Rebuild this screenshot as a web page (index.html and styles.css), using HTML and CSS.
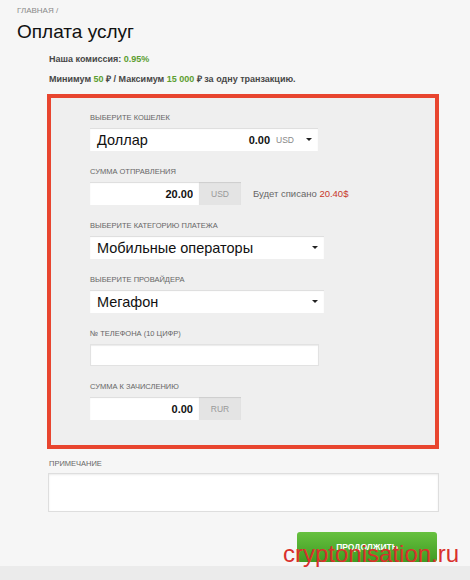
FILE: index.html
```html
<!DOCTYPE html>
<html lang="ru">
<head>
    <meta charset="UTF-8">
    <meta name="viewport" content="width=device-width, initial-scale=1.0">
    <title>Оплата услуг</title>
    <link rel="stylesheet" href="styles.css">
</head>
<body>
    <div class="page">
        <div class="breadcrumb">ГЛАВНАЯ /</div>
        <h1>Оплата услуг</h1>

        <div class="info">
            <p>Наша комиссия: <span class="green">0.95%</span></p>
            <p class="second">Минимум <span class="green">50</span> ₽ / Максимум <span class="green">15 000</span> ₽ за одну транзакцию.</p>
        </div>

        <div class="panel">
            <div class="field">
                <label>Выберите кошелек</label>
                <div class="select wallet">
                    <span class="select-text">Доллар</span>
                    <span class="balance">0.00</span>
                    <span class="currency">USD</span>
                    <span class="caret"></span>
                </div>
            </div>

            <div class="field">
                <label>Сумма отправления</label>
                <div class="row">
                    <div class="amount">
                        <input type="text" value="20.00">
                        <span class="addon">USD</span>
                    </div>
                    <span class="charge">Будет списано <span class="red">20.40$</span></span>
                </div>
            </div>

            <div class="field">
                <label>Выберите категорию платежа</label>
                <div class="select wide">
                    <span class="select-text">Мобильные операторы</span>
                    <span class="caret"></span>
                </div>
            </div>

            <div class="field">
                <label>Выберите провайдера</label>
                <div class="select wide">
                    <span class="select-text">Мегафон</span>
                    <span class="caret"></span>
                </div>
            </div>

            <div class="field">
                <label>№ телефона (10 цифр)</label>
                <input type="text" class="phone">
            </div>

            <div class="field">
                <label>Сумма к зачислению</label>
                <div class="amount">
                    <input type="text" value="0.00">
                    <span class="addon">RUR</span>
                </div>
            </div>
        </div>

        <div class="note">
            <label>Примечание</label>
            <textarea></textarea>
        </div>

        <div class="actions">
            <button>Продолжить</button>
        </div>

        <div class="footer"></div>
    </div>

    <div class="watermark">cryptonisation.ru</div>
</body>
</html>
```

FILE: styles.css
```css
body {
    margin: 0;
    background-color: #f6f6f6;
    font-family: "Liberation Sans", Arial, sans-serif;
    color: #333;
    position: relative;
    height: 580px;
    overflow: hidden;
}

.page {
    padding-top: 6px;
}

.breadcrumb {
    margin-left: 17px;
    font-size: 8px;
    line-height: 10px;
    color: #8a8a8a;
}

h1 {
    margin: 4px 0 0 17px;
    font-size: 19px;
    line-height: 24px;
    font-weight: normal;
    color: #111;
}

.info {
    padding-left: 49px;
    margin-top: 8px;
}

.info p {
    margin: 0;
    font-size: 9px;
    line-height: 14px;
    font-weight: bold;
    color: #474747;
}

.info p.second {
    margin-top: 6px;
}

.green {
    color: #5c9e31;
}

.red {
    color: #c7372a;
}

.panel {
    margin: 8px 0 0 47px;
    width: 392px;
    box-sizing: border-box;
    border: 4px solid #e8452f;
    background-color: #efefef;
    padding: 15px 0 25px 39px;
}

.field {
    margin-bottom: 16px;
}

.field:last-child {
    margin-bottom: 0;
}

label {
    display: block;
    font-size: 7.5px;
    line-height: 10px;
    text-transform: uppercase;
    color: #666;
    margin-bottom: 5px;
}

.select {
    display: flex;
    align-items: center;
    width: 228px;
    height: 23px;
    box-sizing: border-box;
    background-color: white;
    box-shadow: inset 0 1px 1px rgba(0, 0, 0, 0.14);
    padding: 0 6px 0 7px;
}

.select.wide {
    width: 234px;
}

.select-text {
    flex: 1;
    font-size: 14.5px;
    color: #111;
}

.balance {
    font-size: 11px;
    font-weight: bold;
    color: #111;
}

.currency {
    font-size: 8.5px;
    color: #888;
    margin: 0 12px 0 6px;
}

.caret {
    width: 0;
    height: 0;
    border-left: 3px solid transparent;
    border-right: 3px solid transparent;
    border-top: 3px solid #222;
}

.row {
    display: flex;
    align-items: center;
}

.amount {
    display: flex;
    width: 151px;
    height: 23px;
}

.amount input {
    width: 109px;
    height: 23px;
    box-sizing: border-box;
    border: none;
    background-color: white;
    box-shadow: inset 0 1px 1px rgba(0, 0, 0, 0.14);
    text-align: right;
    padding: 0 6px;
    font-family: "Liberation Sans", Arial, sans-serif;
    font-size: 11px;
    font-weight: bold;
    color: #111;
}

.addon {
    width: 42px;
    background-color: #e4e4e4;
    box-shadow: inset 0 1px 1px rgba(0, 0, 0, 0.1);
    font-size: 8.5px;
    color: #999;
    display: flex;
    align-items: center;
    justify-content: center;
}

.charge {
    margin-left: 12px;
    font-size: 9.5px;
    color: #666;
}

.phone {
    display: block;
    width: 229px;
    height: 22px;
    box-sizing: border-box;
    border: 1px solid #e2e2e2;
    background-color: white;
    box-shadow: inset 0 1px 1px rgba(0, 0, 0, 0.08);
}

.note {
    margin-top: 10px;
}

.note label {
    margin-left: 49px;
    margin-bottom: 4px;
}

.note textarea {
    display: block;
    margin-left: 48px;
    width: 391px;
    height: 39px;
    box-sizing: border-box;
    border: 1px solid #dedede;
    background-color: white;
    box-shadow: inset 0 1px 2px rgba(0, 0, 0, 0.08);
    resize: none;
}

.actions {
    display: flex;
    justify-content: flex-end;
    padding-right: 33px;
    margin-top: 20px;
}

button {
    width: 140px;
    height: 30px;
    border: none;
    border-radius: 3px;
    background: linear-gradient(#67c13f, #3f9b22);
    color: white;
    font-family: "Liberation Sans", Arial, sans-serif;
    font-size: 8.5px;
    font-weight: bold;
    text-transform: uppercase;
    cursor: pointer;
}

.footer {
    margin-top: 4px;
    height: 20px;
    background-color: #ebebeb;
}

.watermark {
    position: absolute;
    left: 283px;
    top: 542px;
    font-size: 24px;
    line-height: 24px;
    color: #d9302c;
}
```
